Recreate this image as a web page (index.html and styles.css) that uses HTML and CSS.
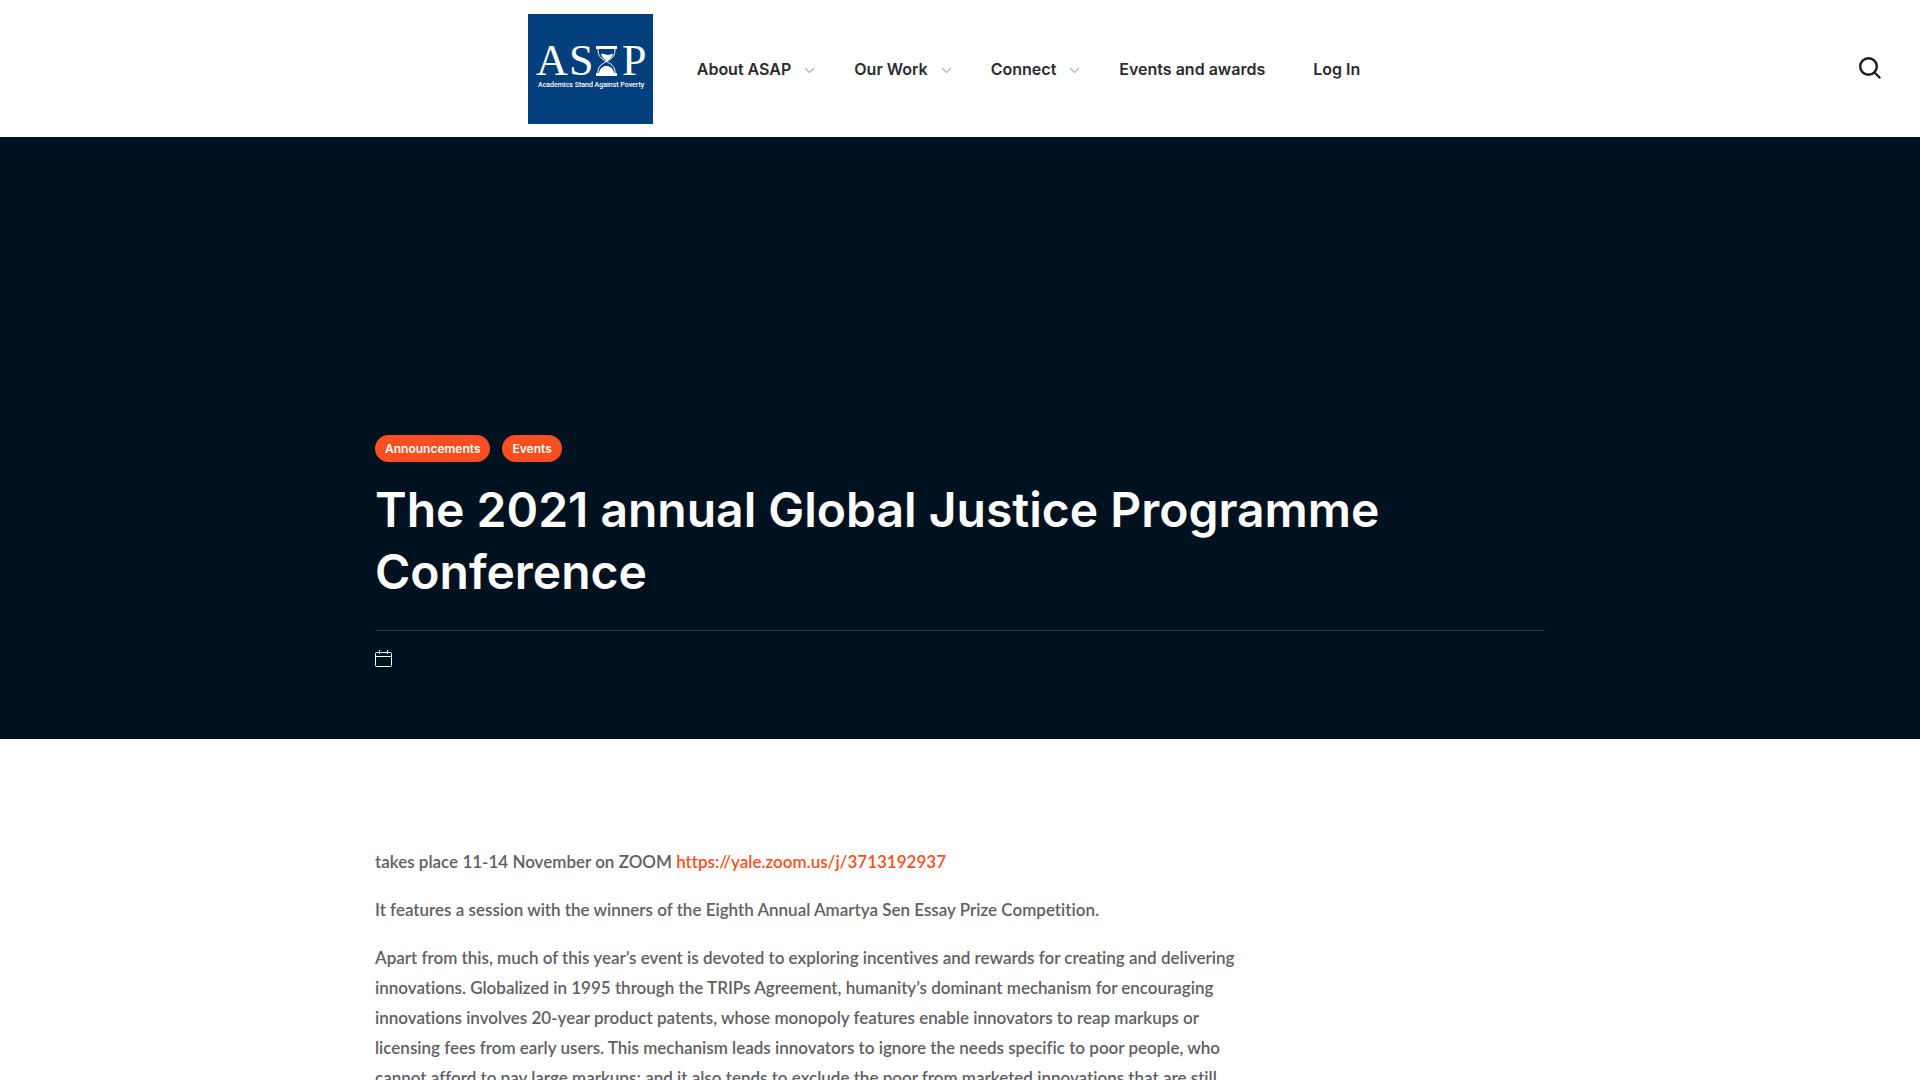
FILE: index.html
```html
<!DOCTYPE html>
<html lang="en">
<head>
    <meta charset="UTF-8">
    <meta name="viewport" content="width=device-width, initial-scale=1.0">
    <title>The 2021 annual Global Justice Programme Conference - ASAP</title>
    <link rel="stylesheet" href="styles.css">
</head>
<body>

    <header class="site-header">
        <div class="header-inner">
            <a class="logo" href="#">
                <svg width="125" height="110" viewBox="0 0 125 110" role="img" aria-label="ASAP, Academics Stand Against Poverty">
                    <rect width="125" height="110" fill="#023f7c"/>
                    <g fill="#fff">
                        <text class="logo-letter" x="8" y="61">A</text>
                        <text class="logo-letter" x="41" y="61">S</text>
                        <text class="logo-letter" x="94" y="61">P</text>
                        <text class="logo-tagline" x="10" y="73">Academics Stand Against Poverty</text>
                        <!-- hourglass -->
                        <rect x="68" y="32" width="21" height="3"/>
                        <rect x="68" y="59" width="21" height="3"/>
                        <path d="M73 40c3-1 5 1 7 1s4-2 5-1c-1 4-4 5-6 8-2-3-5-4-6-8z"/>
                        <path d="M71 59c1-5 4-7 7.500-7s6.500 2 7.500 7z"/>
                    </g>
                    <path d="M70 35c0 7 2 9 8.500 12.500C85 51 87 53 87 59M87 35c0 7-2 9-8.500 12.500C72 51 70 53 70 59" fill="none" stroke="#fff" stroke-width="1"/>
                </svg>
            </a>
            <nav class="main-nav">
                <ul>
                    <li><a href="#">About ASAP <svg class="caret" width="11" height="7" viewBox="0 0 11 7"><path d="M1 1l4.500 4.500L10 1"/></svg></a></li>
                    <li><a href="#">Our Work <svg class="caret" width="11" height="7" viewBox="0 0 11 7"><path d="M1 1l4.500 4.500L10 1"/></svg></a></li>
                    <li><a href="#">Connect <svg class="caret" width="11" height="7" viewBox="0 0 11 7"><path d="M1 1l4.500 4.500L10 1"/></svg></a></li>
                    <li><a href="#">Events and awards</a></li>
                    <li><a href="#">Log In</a></li>
                </ul>
            </nav>
        </div>
        <button class="search-button" type="button" aria-label="Search">
            <svg width="22" height="22" viewBox="0 0 22 22"><circle cx="9.500" cy="9.500" r="8.300"/><path d="M15.500 15.500l5 5"/></svg>
        </button>
    </header>

    <section class="hero">
        <div class="container">
            <div class="categories">
                <a href="#">Announcements</a>
                <a href="#">Events</a>
            </div>
            <h1>The 2021 annual Global Justice Programme Conference</h1>
            <div class="post-meta">
                <svg width="18" height="18" viewBox="0 0 18 18"><rect x="0.500" y="2.500" width="16" height="14" rx="1"/><path d="M1 6.500h15M4.500 0v4M12.500 0v4"/></svg>
            </div>
        </div>
    </section>

    <main class="container">
        <article class="post-content">
            <p>takes place 11-14 November on ZOOM <a href="https://yale.zoom.us/j/3713192937">https://yale.zoom.us/j/3713192937</a></p>
            <p>It features a session with the winners of the Eighth Annual Amartya Sen Essay Prize Competition.</p>
            <p>Apart from this, much of this year’s event is devoted to exploring incentives and rewards for creating and delivering innovations. Globalized in 1995 through the TRIPs Agreement, humanity’s dominant mechanism for encouraging innovations involves 20-year product patents, whose monopoly features enable innovators to reap markups or licensing fees from early users. This mechanism leads innovators to ignore the needs specific to poor people, who cannot afford to pay large markups; and it also tends to exclude the poor from marketed innovations that are still</p>
        </article>
    </main>

</body>
</html>
```
FILE: styles.css
```css
* {
    box-sizing: border-box;
}
html {
    scrollbar-width: none;
}
body {
    margin: 0;
    background: #fff;
    color: #5f6064;
    font-family: Lato, sans-serif;
    font-size: 17px;
    line-height: 30px;
}
a {
    text-decoration: none;
}
.container {
    max-width: 1170px;
    margin: 0 auto;
}

/* Header */
.site-header {
    display: grid;
    grid-template-columns: 1fr auto 1fr;
    align-items: center;
    padding: 14px 39px 13px;
}
.header-inner {
    grid-column: 2;
    display: flex;
    align-items: center;
    gap: 20px;
    padding-right: 8px;
}
.logo svg {
    display: block;
}
.logo-letter {
    font-family: "Liberation Serif", serif;
    font-size: 44px;
}
.logo-tagline {
    font-family: Roboto, sans-serif;
    font-size: 7px;
    font-weight: 500;
}
.main-nav ul {
    display: flex;
    margin: 0;
    padding: 0;
    list-style: none;
}
.main-nav a {
    display: flex;
    align-items: center;
    padding: 0 24px;
    color: #2a2b30;
    font-family: Inter, sans-serif;
    font-size: 16px;
    font-weight: 600;
}
.caret {
    margin: 3px -9px 0 13px;
    fill: none;
    stroke: #b5bcbc;
    stroke-width: 1.5;
}
.search-button {
    justify-self: end;
    padding: 0 0 3px;
    border: 0;
    background: none;
    color: #1b1b22;
    cursor: pointer;
}
.search-button svg {
    display: block;
    fill: none;
    stroke: currentColor;
    stroke-width: 2.4;
    stroke-linecap: round;
}

/* Hero */
.hero {
    padding: 298px 0 71px;
    background: #001220;
    color: #fff;
}
.categories {
    display: flex;
    gap: 12px;
}
.categories a {
    padding: 0 10px;
    border-radius: 14px;
    background: #fc4f21;
    color: #fff;
    font-family: Inter, sans-serif;
    font-size: 12px;
    font-weight: 600;
    line-height: 27px;
}
.hero h1 {
    margin: 17px 0 27px;
    font-family: Inter, sans-serif;
    font-size: 48px;
    font-weight: 600;
    line-height: 62px;
}
.post-meta {
    padding-top: 19px;
    border-top: 1px solid #293945;
}
.post-meta svg {
    display: block;
    fill: none;
    stroke: #fff;
}

/* Post */
.post-content {
    max-width: 878px;
    padding-top: 108px;
    font-weight: 600;
    font-variant-ligatures: none;
}
.post-content p {
    margin: 0 0 18px;
}
.post-content a {
    color: #fc4f21;
}
```
